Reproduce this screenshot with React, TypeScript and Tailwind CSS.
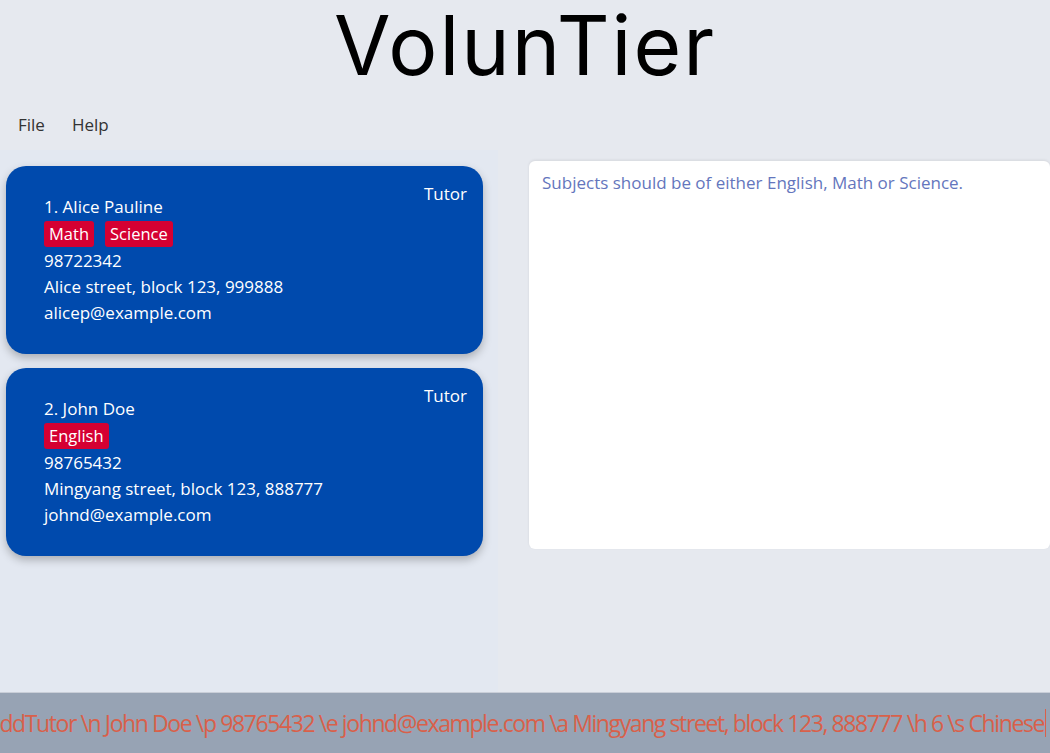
const persons = [
  {
    name: '1. Alice Pauline',
    tags: ['Math', 'Science'],
    phone: '98722342',
    address: 'Alice street, block 123, 999888',
    email: 'alicep@example.com',
  },
  {
    name: '2. John Doe',
    tags: ['English'],
    phone: '98765432',
    address: 'Mingyang street, block 123, 888777',
    email: 'johnd@example.com',
  },
];

function PersonCard({ p }: { p: (typeof persons)[number] }) {
  return (
    <div className="relative h-[188px] rounded-[20px] bg-[#004aad] pl-[38px] pt-[28px] text-[17px] leading-[26px] text-white shadow-[0_4px_8px_rgba(0,0,0,0.25)]">
      <span className="absolute right-4 top-[15px]">Tutor</span>
      <div>{p.name}</div>
      <div className="flex gap-[11px] py-px">
        {p.tags.map((t) => (
          <span key={t} className="rounded-[3px] bg-[#d50032] px-[5px] text-[16.5px] leading-[26px]">
            {t}
          </span>
        ))}
      </div>
      <div>{p.phone}</div>
      <div>{p.address}</div>
      <div>{p.email}</div>
    </div>
  );
}

export default function App() {
  return (
    <div className="flex h-[753px] w-[1050px] flex-col overflow-hidden bg-[#e6e9ef] font-['Open_Sans',sans-serif]">
      <header className="flex h-[100px] justify-center pt-[2px]">
        <h1 className="font-['Inter',sans-serif] text-[82px] leading-[88px] tracking-[2px] text-black">
          VolunTier
        </h1>
      </header>

      <nav className="flex h-[50px] items-center gap-[27px] px-[18px] text-[17px] text-[#333]">
        <span>File</span>
        <span>Help</span>
      </nav>

      <main className="flex flex-1">
        <section className="flex w-[498px] flex-col gap-[14px] bg-[#e3e8f1] pl-[6px] pr-[15px] pt-4">
          {persons.map((p) => (
            <PersonCard key={p.name} p={p} />
          ))}
        </section>
        <section className="flex-1 pl-[31px] pt-[11px]">
          <div className="h-[388px] rounded-md bg-white px-[13px] pt-[9px] text-[17px] text-[#6476bd] shadow-[0_-1px_3px_rgba(0,0,0,0.08)]">
            Subjects should be of either English, Math or Science.
          </div>
        </section>
      </main>

      <footer className="flex h-[61px] items-center justify-end overflow-hidden border-t border-[#c9ced8] bg-[#97a3b4] pr-[4px]">
        <span className="whitespace-nowrap text-[23px] tracking-[-1.4px] text-[#d9604a]">
          addTutor \n John Doe \p 98765432 \e johnd@example.com \a Mingyang street, block 123, 888777 \h 6 \s Chinese
        </span>
        <span className="ml-px h-[28px] w-px shrink-0 bg-[#d9604a]" />
      </footer>
    </div>
  );
}
